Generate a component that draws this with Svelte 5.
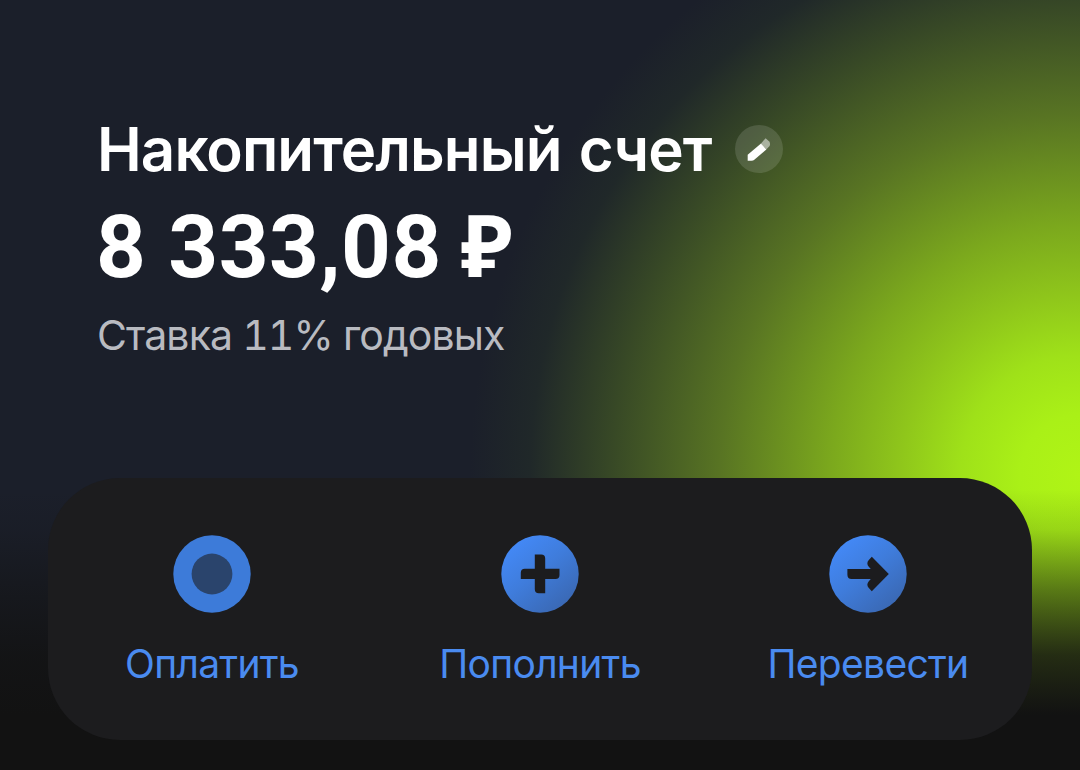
<script lang="ts">
	type Action = {
		id: 'pay' | 'topup' | 'transfer';
		label: string;
	};

	const account = {
		title: 'Накопительный счет',
		balance: '8 333,08',
		currency: '₽',
		rate: 'Ставка 11% годовых'
	};

	const actions: Action[] = [
		{ id: 'pay', label: 'Оплатить' },
		{ id: 'topup', label: 'Пополнить' },
		{ id: 'transfer', label: 'Перевести' }
	];
</script>

<main class="account">
	<header class="summary">
		<div class="title-row">
			<h1 class="title">{account.title}</h1>
			<button class="edit" aria-label="Изменить название">
				<svg width="48" height="48" viewBox="0 0 48 48">
					<path d="M12.7 29.8 26 18.4 31.3 24.4 19.6 34.6Q18.2 35.8 16.4 35.8H12.7Z" fill="#fff" />
					<path
						d="M26 18.4 30.6 13.2 34 16.2Q35.8 18.2 34.6 21L31.3 24.4Z"
						fill="#fff"
						fill-opacity="0.5"
					/>
				</svg>
			</button>
		</div>
		<div class="balance">{account.balance} <span class="currency">{account.currency}</span></div>
		<div class="rate">{account.rate}</div>
	</header>

	<nav class="actions">
		{#each actions as action (action.id)}
			<button class="action {action.id}">
				<svg width="78" height="78" viewBox="0 0 78 78">
					<defs>
						<linearGradient id="fill-{action.id}" x1="0.2" y1="0.1" x2="0.85" y2="0.9">
							<stop offset="0" stop-color="#4388f5" />
							<stop offset="0.45" stop-color="#3f7cdb" />
							<stop offset="1" stop-color="#3a68b3" />
						</linearGradient>
					</defs>
					{#if action.id === 'pay'}
						<circle cx="39" cy="39" r="38.7" fill="#3d7bd9" />
						<circle cx="39" cy="39" r="20.4" fill="#2a446c" />
					{:else}
						<circle cx="39" cy="39" r="38.7" fill="url(#fill-{action.id})" />
					{/if}
					{#if action.id === 'topup'}
						<path
							d="M33.8 19.5H40.2Q44.2 19.5 44.2 23.5V33.7H58.5V40Q58.5 44 54.5 44H44.2V58.3H37.8Q33.8 58.3 33.8 54.3V44H19.8V37.7Q19.8 33.7 23.8 33.7H33.8Z"
							fill="#1c1c1e"
						/>
					{:else if action.id === 'transfer'}
						<path
							d="M18.4 34H41.8L39.8 31.8Q37 28.4 39.6 25.2L42.8 21.8 59.8 39 42.8 56.2 39.6 52.8Q37 49.6 39.8 46.2L41.8 44H22.6Q18.4 44 18.4 39.8Z"
							fill="#1c1c1e"
						/>
					{/if}
				</svg>
				<span class="label">{action.label}</span>
			</button>
		{/each}
	</nav>
</main>

<style>
	:global(body) {
		margin: 0;
		background: #121212;
	}

	.account {
		box-sizing: border-box;
		width: 1080px;
		height: 770px;
		padding: 118px 48px 30px;
		display: flex;
		flex-direction: column;
		justify-content: space-between;
		overflow: hidden;
		font-family: Inter, 'Noto Sans', sans-serif;
		background:
			linear-gradient(
				to bottom,
				rgba(18, 18, 18, 0) 490px,
				rgba(18, 18, 18, 0.12) 530px,
				rgba(18, 18, 18, 0.5) 590px,
				rgba(18, 18, 18, 0.85) 655px,
				#121212 715px
			),
			radial-gradient(
				circle at 1080px 475px,
				#b0f416 0,
				#aaf017 60px,
				#9fe119 120px,
				#8fc61b 180px,
				#7ba81d 250px,
				#587423 360px,
				#374826 470px,
				#202829 550px,
				#1b1f2a 610px
			);
	}

	.summary {
		padding-left: 49px;
		color: #fff;
	}

	.title-row {
		display: flex;
		align-items: center;
		gap: 24px;
		height: 62px;
	}

	.title {
		margin: 0;
		width: 614px;
		font-size: 60px;
		font-weight: 600;
		line-height: 62px;
		letter-spacing: -0.9px;
		word-spacing: 3px;
		white-space: nowrap;
	}

	.edit {
		width: 48px;
		height: 48px;
		padding: 0;
		border: none;
		border-radius: 50%;
		background: rgba(255, 255, 255, 0.13);
		cursor: pointer;
	}

	.edit svg {
		display: block;
	}

	.balance {
		margin: 17px 0 0 -1px;
		font-family: Roboto, 'Noto Sans', sans-serif;
		font-size: 87px;
		font-weight: 700;
		line-height: 100px;
		letter-spacing: 0.4px;
		white-space: nowrap;
	}

	.currency {
		margin-left: -3px;
		font-family: 'Noto Sans', sans-serif;
		font-size: 86px;
		line-height: 1;
	}

	.rate {
		margin-top: 10px;
		font-size: 41px;
		line-height: 56px;
		letter-spacing: -0.9px;
		font-variant-numeric: tabular-nums;
		color: #b9bbc1;
		white-space: nowrap;
	}

	.actions {
		box-sizing: border-box;
		display: grid;
		grid-template-columns: repeat(3, 1fr);
		height: 262px;
		padding-top: 57px;
		border-radius: 72px;
		background: #1c1c1e;
	}

	.action {
		display: flex;
		flex-direction: column;
		align-items: center;
		gap: 24px;
		padding: 0;
		border: none;
		background: none;
		font-family: inherit;
		color: #4a8bf0;
		cursor: pointer;
	}

	.label {
		font-size: 39px;
		line-height: 54px;
		letter-spacing: -0.7px;
		white-space: nowrap;
	}
</style>
